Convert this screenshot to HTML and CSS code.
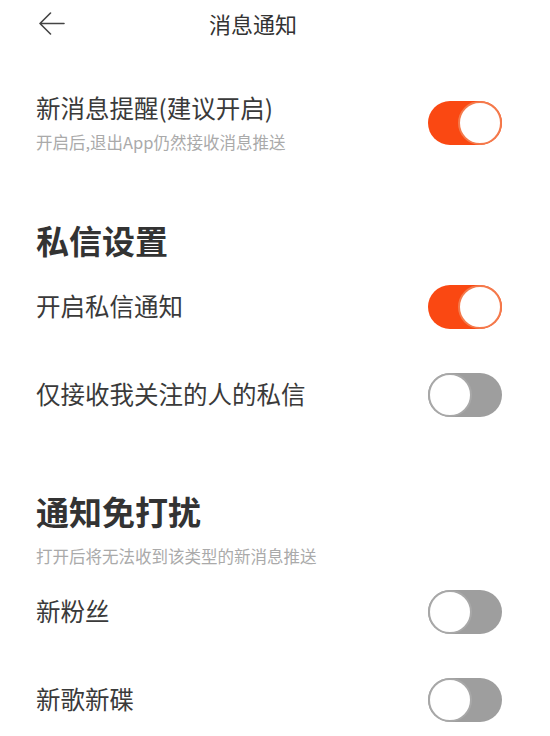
FILE: index.html
```html
<!DOCTYPE html>
<html lang="zh-CN">
<head>
    <meta charset="UTF-8">
    <meta name="viewport" content="width=device-width, initial-scale=1.0">
    <title>消息通知</title>
    <link rel="stylesheet" href="styles.css">
</head>
<body>
    <div class="header">
        <span class="back">
            <svg width="27" height="23" viewBox="0 0 27 23">
                <path d="M26 11.5H2M12.5 1L2 11.5L12.5 22" fill="none" stroke="#444" stroke-width="1.6" stroke-linecap="round" stroke-linejoin="round"/>
            </svg>
        </span>
        <span class="title">消息通知</span>
    </div>

    <div class="item first">
        <div class="text">
            <div class="label">新消息提醒(建议开启)</div>
            <div class="sub">开启后,退出App仍然接收消息推送</div>
        </div>
        <div class="switch on"><span class="knob"></span></div>
    </div>

    <h2 class="section">私信设置</h2>
    <div class="item">
        <div class="label">开启私信通知</div>
        <div class="switch on"><span class="knob"></span></div>
    </div>
    <div class="item">
        <div class="label">仅接收我关注的人的私信</div>
        <div class="switch"><span class="knob"></span></div>
    </div>

    <h2 class="section second">通知免打扰</h2>
    <div class="sub section-sub">打开后将无法收到该类型的新消息推送</div>
    <div class="item">
        <div class="label">新粉丝</div>
        <div class="switch"><span class="knob"></span></div>
    </div>
    <div class="item">
        <div class="label">新歌新碟</div>
        <div class="switch"><span class="knob"></span></div>
    </div>
</body>
</html>
```

FILE: styles.css
```css
body {
    margin: 0;
    padding: 0 48px 0 36px;
    background: #fff;
    color: #3a3a3a;
    font-family: "Noto Sans CJK SC", "Noto Sans", sans-serif;
}
.header {
    height: 46px;
    display: flex;
    align-items: center;
    justify-content: center;
    position: relative;
}
.back {
    position: absolute;
    left: 2px;
    top: 12px;
    line-height: 0;
}
.title {
    font-size: 22px;
    color: #333;
    margin-right: 32px;
}
.item {
    height: 88px;
    display: flex;
    align-items: center;
    justify-content: space-between;
}
.item.first {
    height: auto;
    margin-top: 45px;
}
.label {
    font-size: 24.5px;
    line-height: 34px;
}
.sub {
    font-size: 16.5px;
    line-height: 22px;
    color: #aaa;
    margin-top: 6px;
}
.section {
    margin: 65px 0 0;
    font-size: 33px;
    line-height: 44px;
    font-weight: bold;
    color: #333;
}
.section.second {
    margin-top: 51px;
}
.section-sub {
    margin-top: 12px;
}
.switch {
    width: 74px;
    height: 44px;
    border-radius: 22px;
    background: #9e9e9e;
    display: flex;
    justify-content: flex-start;
    margin-top: 1px;
}
.switch.on {
    background: #fa4812;
    justify-content: flex-end;
}
.knob {
    width: 44px;
    height: 44px;
    box-sizing: border-box;
    border-radius: 50%;
    background: #fff;
    border: 2px solid #a8a8a8;
}
.switch.on .knob {
    border-color: #f47a4c;
}
```
